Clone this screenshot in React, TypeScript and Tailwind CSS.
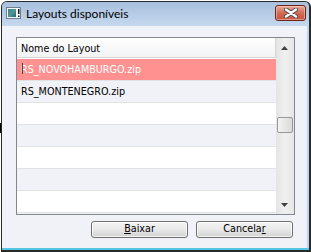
import React from 'react'

const rows = [
  { name: 'RS_NOVOHAMBURGO.zip', selected: true },
  { name: 'RS_MONTENEGRO.zip' },
  { name: '' },
  { name: '' },
  { name: '' },
  { name: '' },
  { name: '' },
  { name: '' },
]

function AppIcon() {
  return (
    <svg width="15" height="12" viewBox="0 0 15 12">
      <defs>
        <linearGradient id="ic" x1="0" y1="0" x2="1" y2="1">
          <stop offset="0" stopColor="#3f7fa8" />
          <stop offset="0.5" stopColor="#4f9a8a" />
          <stop offset="1" stopColor="#2c5a86" />
        </linearGradient>
      </defs>
      <rect x="0.5" y="0.5" width="14" height="11" fill="#f4f6f8" stroke="#6f7f90" />
      <rect x="2" y="2" width="8" height="8" fill="url(#ic)" />
      <rect x="12" y="2" width="1.5" height="5" fill="#1a1a1a" />
      <rect x="12" y="8.5" width="1.5" height="1.5" fill="#1a1a1a" />
    </svg>
  )
}

function CloseX() {
  return (
    <svg width="14" height="10" viewBox="0 0 14 10">
      <path d="M2 1.5 L12 8.5 M12 1.5 L2 8.5" stroke="#4a4a4a" strokeWidth="4.2" strokeLinecap="round" />
      <path d="M2 1.5 L12 8.5 M12 1.5 L2 8.5" stroke="#ffffff" strokeWidth="2.4" strokeLinecap="round" />
    </svg>
  )
}

function Arrow({ down }: { down?: boolean }) {
  return (
    <svg width="7" height="4" viewBox="0 0 7 4">
      {down ? (
        <polygon points="0,0 7,0 3.5,4" fill="#404040" />
      ) : (
        <polygon points="3.5,0 7,4 0,4" fill="#404040" />
      )}
    </svg>
  )
}

function Button({ children }: { children: React.ReactNode }) {
  return (
    <button className="flex h-[17px] w-[97px] items-center justify-center rounded-[3px] border border-[#707070] bg-gradient-to-b from-[#f3f3f3] via-[#e9e9e9] to-[#d2d2d2] text-[10.7px] leading-none text-black shadow-[inset_0_0_0_1px_rgba(255,255,255,0.7)]">
      {children}
    </button>
  )
}

export default function App() {
  return (
    <div className="relative h-[252px] w-[311px] overflow-hidden bg-white font-['DejaVu_Sans_Condensed','DejaVu_Sans',sans-serif]">
      {/* stray pixels from the window behind */}
      <div className="absolute left-0 top-[123px] h-[10px] w-[1px] bg-black" />

      <div className="ml-[1px] mt-[1px] flex h-[251px] w-[310px] flex-col overflow-hidden rounded-t-[6px] border-b-2 border-l border-r-2 border-t border-[#2a2a2a] bg-[#bcd6ee]">
        {/* ---------- title bar ---------- */}
        <div className="flex h-[24px] flex-none items-start bg-gradient-to-b from-[#a8c0dd] to-[#c5d8ee]">
          <div className="ml-[4px] mt-[5px]">
            <AppIcon />
          </div>
          <span className="ml-[5px] mt-[4px] font-['Lato',sans-serif] text-[12px] leading-[16px] text-black">
            Layouts disponíveis
          </span>
          <div className="ml-auto mr-[3px] mt-[3px] flex h-[16px] w-[31px] items-center justify-center rounded-[3px] border border-[#6b2518] bg-gradient-to-b from-[#e9ab9b] via-[#cf6a54] to-[#c8553d] shadow-[inset_0_0_0_1px_rgba(255,220,210,0.5)]">
            <CloseX />
          </div>
        </div>

        {/* ---------- client ---------- */}
        <div className="flex min-h-0 flex-1">
          <div className="flex flex-1 flex-col bg-[#f1f2f7] pl-[14px] pt-[11px]">
            {/* list */}
            <div className="flex h-[178px] w-[279px] border border-[#828790] bg-white">
              <div className="flex w-[259px] flex-col overflow-hidden">
                <div className="flex h-[20px] flex-none items-center border-b border-r border-[#d6d6d8] bg-gradient-to-b from-white to-[#f2f3f5] pl-[4px] pt-[3px] text-[10.7px] text-black">
                  Nome do Layout
                </div>
                <div className="h-[1px] flex-none" />
                {rows.map((r, i) => (
                  <div
                    key={i}
                    className={
                      'flex h-[22px] flex-none items-center border-b border-[#e1e2e6] pl-[4px] pt-[1px] text-[10.7px] ' +
                      (r.selected ? 'bg-[#ff9191] text-white' : i % 2 === 1 ? 'bg-[#f1f2f7] text-black' : 'bg-white text-black')
                    }
                  >
                    {r.selected ? (
                      <span className="relative">
                        <span className="absolute left-[1px] top-[1px] h-[11px] w-[1px] bg-[#2f4f4f]" />
                        {r.name}
                      </span>
                    ) : (
                      r.name
                    )}
                  </div>
                ))}
              </div>
              {/* scrollbar */}
              <div className="flex w-[18px] flex-col bg-gradient-to-r from-[#e4e4e4] via-[#f0f0f0] to-[#e6e6e6]">
                <div className="flex h-[17px] flex-none items-start justify-center pt-[8px] pr-[1px]">
                  <Arrow />
                </div>
                <div className="flex-1">
                  <div className="ml-[1px] mt-[62px] h-[16px] w-[16px] rounded-[2px] border border-[#979797] bg-gradient-to-r from-[#f4f4f4] to-[#d9d9d9]" />
                </div>
                <div className="flex h-[17px] flex-none items-end justify-center pb-[7px] pr-[1px]">
                  <Arrow down />
                </div>
              </div>
            </div>

            {/* buttons */}
            <div className="mt-[6px] flex gap-[8px] pl-[75px]">
              <Button>
                <u>B</u>aixar
              </Button>
              <Button>
                Cancela<u>r</u>
              </Button>
            </div>
          </div>
          <div className="w-[2px] flex-none bg-[#bcd6ee]" />
        </div>
        <div className="h-[2px] flex-none bg-[#52c6e3]" />
      </div>
    </div>
  )
}
